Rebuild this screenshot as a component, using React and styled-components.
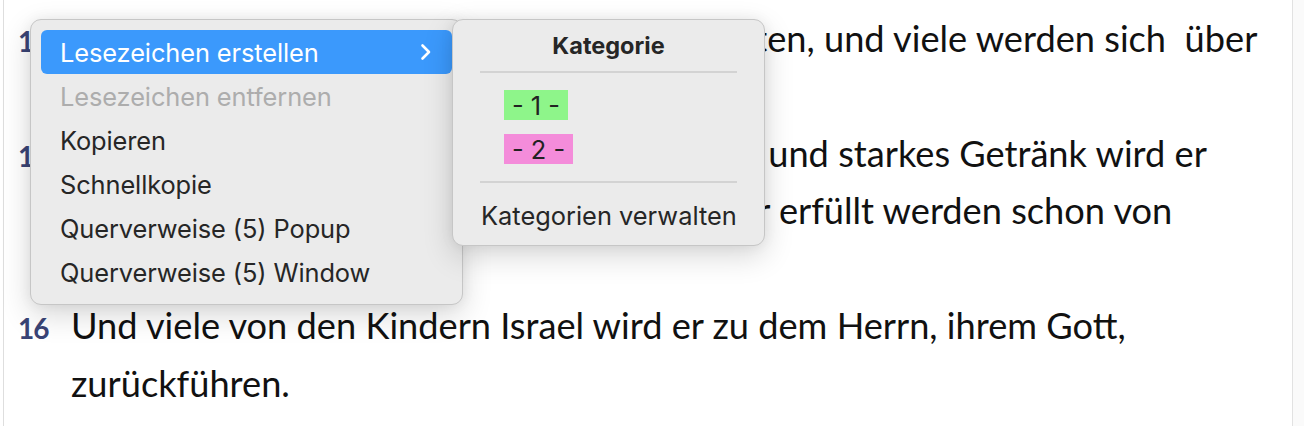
import React from "react";
import styled, { createGlobalStyle } from "styled-components";

const GlobalStyle = createGlobalStyle`
  html, body { margin: 0; padding: 0; background: #ffffff; }
  body { width: 1304px; height: 426px; overflow: hidden; }
  * { box-sizing: border-box; }
`;

const Page = styled.div`
  position: relative;
  width: 1304px;
  height: 426px;
  display: flex;
  overflow: hidden;
  background: #ffffff;
`;

const LeftGutter = styled.div`
  width: 4px;
  flex: none;
  border-right: 1px solid #dedede;
`;

const Reader = styled.div`
  flex: 1;
  display: flex;
  flex-direction: column;
  padding-left: 14px;
  margin-top: -48px;
  font-family: "Lato", "Open Sans", sans-serif;
  font-size: 36.2px;
  line-height: 57.5px;
  color: #111111;
`;

const ScrollStrip = styled.div`
  width: 12px;
  flex: none;
  border-left: 1px solid #e2e2e2;
  background: #fafafa;
`;

const Verse = styled.div`
  display: grid;
  grid-template-columns: 53px 1fr;
  align-items: baseline;
`;

const VerseNum = styled.span`
  font-family: "Lato", sans-serif;
  font-weight: 700;
  font-size: 28px;
  letter-spacing: -1px;
  color: #3a4476;
`;

const VerseText = styled.span`
  white-space: nowrap;
`;

const Words = styled.span`
  word-spacing: ${(p) => p.$ws || 0}px;
`;

const Menu = styled.div`
  position: absolute;
  left: ${(p) => p.$left}px;
  top: ${(p) => p.$top}px;
  width: ${(p) => p.$width}px;
  padding: ${(p) => p.$pad};
  background: #ebebeb;
  border: 1px solid #c6c6c6;
  border-radius: 11px;
  box-shadow: 0 10px 30px rgba(0, 0, 0, 0.16), 0 0 14px rgba(0, 0, 0, 0.06);
  font-family: "Inter", "Roboto", sans-serif;
  font-size: 25.4px;
  color: #262626;
  display: flex;
  flex-direction: column;
`;

const Item = styled.div`
  height: 44px;
  display: flex;
  align-items: center;
  justify-content: space-between;
  padding: 0 19px 0 19px;
  border-radius: 6px;
  background: ${(p) => (p.$active ? "#3b99fc" : "transparent")};
  color: ${(p) => (p.$active ? "#ffffff" : p.$disabled ? "#adadad" : "#262626")};
  letter-spacing: -0.1px;
`;

const SubTitle = styled.div`
  height: 44px;
  display: flex;
  align-items: center;
  justify-content: center;
  font-weight: 700;
  font-size: 23.5px;
  color: #262626;
`;

const Separator = styled.div`
  height: 2px;
  background: #d3d3d3;
  margin: ${(p) => p.$margin};
`;

const ChipRow = styled.div`
  height: 44px;
  display: flex;
  align-items: center;
  padding-left: 24px;
`;

const Chip = styled.span`
  display: inline-flex;
  align-items: center;
  height: 30px;
  padding: 0 ${(p) => p.$pad}px;
  background: ${(p) => p.$color};
  color: #222222;
  font-size: 25.4px;
  white-space: pre;
`;

const SubItem = styled.div`
  height: 44px;
  display: flex;
  align-items: center;
  padding-left: ${(p) => p.$indent}px;
  color: #262626;
`;

const Chevron = () => (
  <svg width="14" height="18" viewBox="0 0 14 18" fill="none">
    <path d="M3.5 2.5 L10 9 L3.5 15.5" stroke="#ffffff" strokeWidth="2.6" strokeLinecap="round" strokeLinejoin="round" />
  </svg>
);

export default function App() {
  return (
    <>
      <GlobalStyle />
      <Page>
        <LeftGutter />
        <Reader>
          <Verse>
            <span />
            <VerseText>
              <Words $ws={4}>gebären, und du sollst ihm den Namen Johannes geben.</Words>
            </VerseText>
          </Verse>
          <Verse>
            <VerseNum>14</VerseNum>
            <VerseText>
              <Words $ws={6.4}>Und er wird dir Freude und Wonne bereiten,</Words> und viele werden sich &nbsp;über
              <br />
              seine Geburt freuen.
            </VerseText>
          </Verse>
          <Verse>
            <VerseNum>15</VerseNum>
            <VerseText>
              <Words $ws={-1.8}>Denn er wird groß sein vor dem Herrn; Wein</Words> und starkes Getränk wird er
              <br />
              nicht trinken, und mit Heiligem Geist wird er erfüllt werden schon von
              <br />
              Mutterleibe an.
            </VerseText>
          </Verse>
          <Verse>
            <VerseNum>16</VerseNum>
            <VerseText>
              Und viele von den Kindern Israel wird er zu dem Herrn, ihrem Gott,
              <br />
              zurückführen.
            </VerseText>
          </Verse>
        </Reader>
        <ScrollStrip />

        <Menu $left={30} $top={19} $width={433} $pad="10px 10px 10px 10px">
          <Item $active>
            <span>Lesezeichen erstellen</span>
            <Chevron />
          </Item>
          <Item $disabled>Lesezeichen entfernen</Item>
          <Item>Kopieren</Item>
          <Item>Schnellkopie</Item>
          <Item>Querverweise (5) Popup</Item>
          <Item>Querverweise (5) Window</Item>
        </Menu>

        <Menu $left={452} $top={19} $width={313} $pad="3px 27px 8px 27px">
          <SubTitle>Kategorie</SubTitle>
          <Separator $margin="4px 0 10px 0" />
          <ChipRow><Chip $color="#8ef58a" $pad={8}>- 1 -</Chip></ChipRow>
          <ChipRow><Chip $color="#f48cda" $pad={8}>- 2 -</Chip></ChipRow>
          <Separator $margin="10px 0 10px 0" />
          <SubItem $indent={1}>Kategorien verwalten</SubItem>
        </Menu>
      </Page>
    </>
  );
}
